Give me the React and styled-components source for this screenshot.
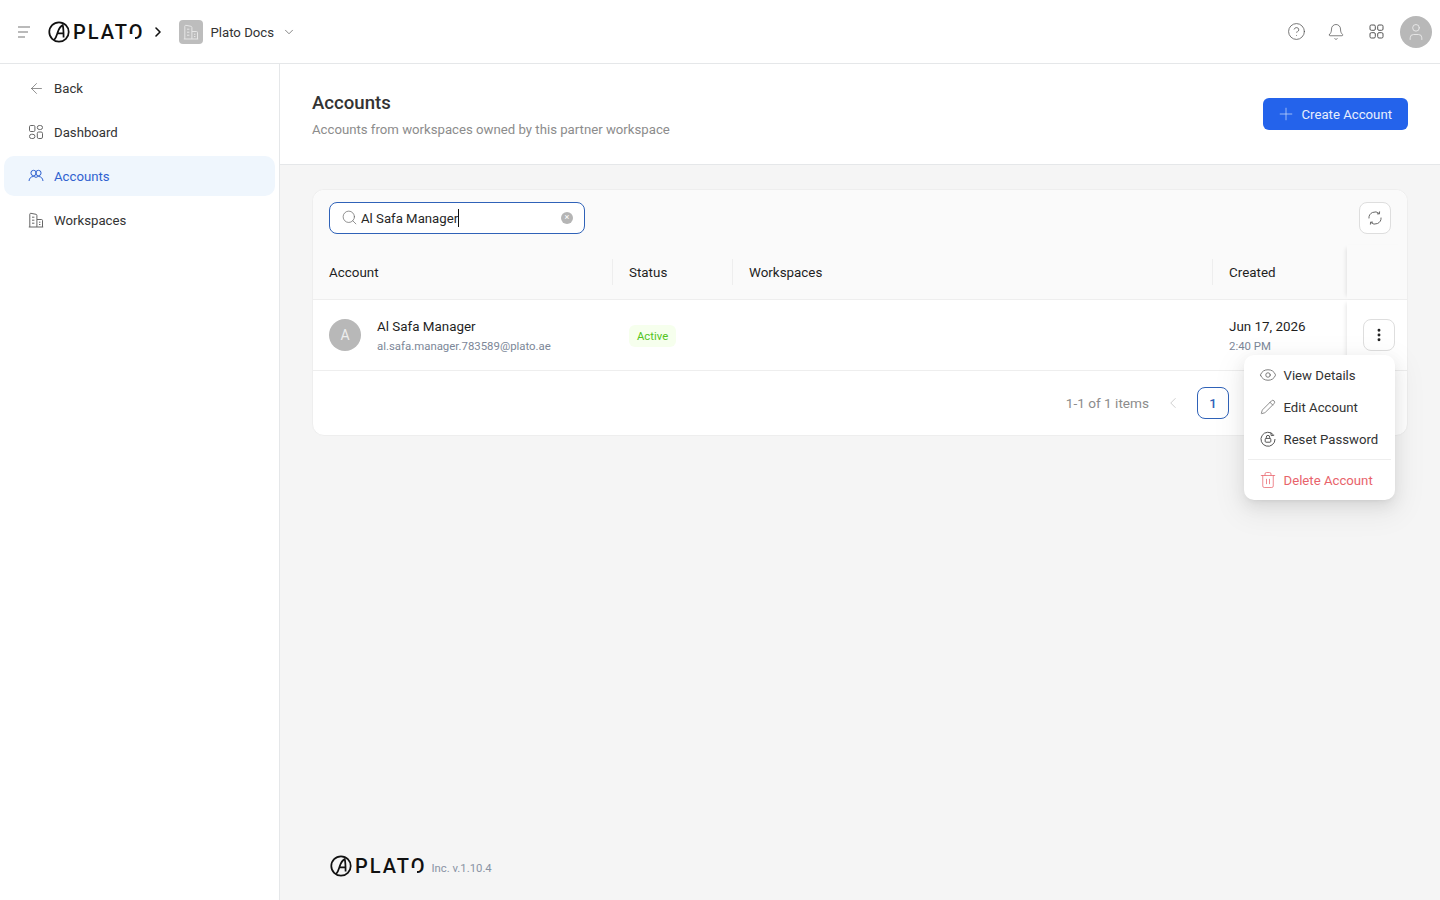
import React from "react";
import styled, { createGlobalStyle } from "styled-components";
import { ArrowLeft, ChevronDown, ChevronLeft, ChevronRight, CircleHelp, Bell, Plus, Search, EllipsisVertical, Eye, Pencil, Trash2, User } from "lucide-react";

const Global = createGlobalStyle`
  html, body { margin: 0; padding: 0; height: 100%; }
  body { font-family: "Roboto", "Noto Sans", sans-serif; background: #fff; color: #262626; font-size: 13.2px; }
  * { box-sizing: border-box; }
`;
const Page = styled.div`width: 1440px; height: 900px; display: flex; flex-direction: column; overflow: hidden;`;
const Header = styled.header`height: 64px; flex: none; display: flex; align-items: center; justify-content: space-between; padding: 0 8px 0 18px; border-bottom: 1px solid #e5e7e9; background: #fff;`;
const HeaderLeft = styled.div`display: flex; align-items: center;`;
const HeaderRight = styled.div`display: flex; align-items: center;`;
const HeaderIconBtn = styled.span`width: 40px; height: 32px; display: flex; align-items: center; justify-content: center; color: #555;`;
const LogoWrap = styled.div`display: flex; align-items: center; gap: 3px; color: #111; margin-left: ${p => p.$ml || 0}px;`;
const Wordmark = styled.span`position: relative; font-family: "Roboto", sans-serif; font-weight: 500; line-height: 1; font-size: 20px; letter-spacing: 2px;
  &::after { content: ""; position: absolute; right: 9px; bottom: 2px; width: 7px; height: 6px; background: ${p => p.$bg}; }`;
const Crumb = styled.span`display: flex; margin: 0 13px 0 6px; color: #111;`;
const WsBadge = styled.span`width: 24px; height: 24px; border-radius: 4px; background: #bdbdbd; color: #e6e6e6; display: flex; align-items: center; justify-content: center;`;
const WsName = styled.span`margin: 0 8px 0 7px; color: #333; padding-top: 1px;`;
const Avatar = styled.span`width: 32px; height: 32px; border-radius: 50%; background: #b8b8b8; color: #eee; display: flex; align-items: center; justify-content: center; font-size: 14px; flex: none;`;
const UserAvatar = styled(Avatar)`margin-left: 4px;`;
const Body = styled.div`flex: 1; display: flex; min-height: 0;`;
const Sidebar = styled.nav`width: 280px; flex: none; border-right: 1px solid #e5e7e9; padding: 4px 4px; display: flex; flex-direction: column; gap: 4px; background: #fff;`;
const NavItem = styled.a`height: 40px; width: 271px; display: flex; align-items: center; gap: 10px; padding-left: 24px; border-radius: 10px; color: ${p => p.$active ? "#2f62d0" : "#333"}; background: ${p => p.$active ? "#eff6fd" : "transparent"};`;
const Slot = styled.span`width: 16px; height: 16px; flex: none; display: flex; align-items: center; justify-content: center; color: ${p => p.$c || "#666"};
  svg { flex: none; }`;
const Main = styled.main`flex: 1; display: flex; flex-direction: column; background: #f5f5f5; min-width: 0;`;
const PageHead = styled.div`height: 101px; flex: none; background: #fff; border-bottom: 1px solid #e5e7e9; padding: 0 32px; display: flex; align-items: center; justify-content: space-between;`;
const Titles = styled.div`display: flex; flex-direction: column; gap: 4px; padding-top: 2px;`;
const Title = styled.h1`margin: 0; font-size: 18.6px; font-weight: 500; color: #333; line-height: 26px;`;
const Sub = styled.p`margin: 0; color: #8c8c8c; line-height: 20px;`;
const Primary = styled.button`height: 32px; padding: 0 16px 0 15px; border: 0; border-radius: 6px; background: #2463eb; color: #e8effd; font: inherit; display: flex; align-items: center; gap: 8px;`;
const Content = styled.div`flex: 1; padding: 24px 32px 0; display: flex; flex-direction: column; min-height: 0;`;
const Card = styled.section`height: 247px; flex: none; background: #fff; border: 1px solid #eee; border-radius: 12px; position: relative; display: flex; flex-direction: column;`;
const Toolbar = styled.div`height: 55px; flex: none; background: #fafafa; border-radius: 12px 12px 0 0; padding: 0 16px; display: flex; align-items: center; justify-content: space-between;`;
const SearchBox = styled.div`width: 256px; height: 32px; border: 1px solid #2f62b8; border-radius: 8px; background: #fff; display: flex; align-items: center; padding: 0 11px; gap: 3px;
  svg { color: #666; flex: none; }`;
const SearchText = styled.span`flex: 1; color: #262626; white-space: nowrap; display: flex; align-items: center; padding-top: 1px;
  &::after { content: ""; width: 1px; height: 18px; background: #111; }`;
const ClearDot = styled.span`width: 12px; height: 12px; border-radius: 50%; background: #b5b5b5; display: flex; align-items: center; justify-content: center; color: #fff; font-size: 9px; line-height: 1;`;
const IconBtn = styled.button`width: 32px; height: 32px; padding: 0; border: 1px solid #dedede; border-radius: 8px; background: #fff; color: ${p => p.$c || "#666"}; display: flex; align-items: center; justify-content: center;`;
const cols = "300px 120px 480px 134px 60px";
const HeadRow = styled.div`height: 55px; flex: none; display: grid; grid-template-columns: ${cols}; background: #fafafa; border-bottom: 1px solid #eee;`;
const HeadCell = styled.div`display: flex; align-items: center; padding-left: 16px; color: #1f1f1f; font-size: 13.4px; position: relative;
  &::after { content: ""; display: ${p => p.$noSep ? "none" : "block"}; position: absolute; right: 0; top: 14px; height: 26px; width: 1px; background: #eeeeee; }`;
const StickyCell = styled.div`display: flex; align-items: center; justify-content: center; box-shadow: -4px 0 4px -3px rgba(0,0,0,.10); padding-left: 4px;`;
const Row = styled.div`height: 71px; flex: none; display: grid; grid-template-columns: ${cols}; border-bottom: 1px solid #eee;`;
const Cell = styled.div`display: flex; align-items: center; padding-left: 16px; gap: 16px; min-width: 0;`;
const Stack = styled.div`display: flex; flex-direction: column; gap: 1px; margin-top: 2px;`;
const Primaryline = styled.div`color: #1f1f1f; font-size: 13.4px; line-height: 20px;`;
const Secondary = styled.div`font-size: 11.4px; color: #7c8798; line-height: 17px;`;
const Tag = styled.span`height: 22px; margin-top: 2px; display: inline-flex; align-items: center; padding: 0 8px; border-radius: 6px; background: #f6ffed; color: #52c41a; font-size: 11.3px;`;
const Pagination = styled.div`flex: 1; display: flex; align-items: center; justify-content: flex-end; padding-right: 138px;`;
const Count = styled.span`color: #8c8c8c; font-size: 13.6px; margin-right: 8px; padding-bottom: 1px;`;
const PageArrow = styled.span`width: 32px; height: 32px; display: flex; align-items: center; justify-content: center; color: #bfbfbf;`;
const PageNum = styled.span`width: 32px; height: 32px; margin: 0 8px; border: 1px solid #2f62b8; border-radius: 8px; color: #2f62b8; font-weight: 500; display: flex; align-items: center; justify-content: center;`;
const Menu = styled.div`position: absolute; left: 931px; top: 165px; width: 151px; height: 145px; background: #fff; border-radius: 10px; box-shadow: 0 6px 16px rgba(0,0,0,.08), 0 3px 6px -4px rgba(0,0,0,.12), 0 9px 28px 8px rgba(0,0,0,.05); padding: 4px; display: flex; flex-direction: column; z-index: 3;`;
const MenuItem = styled.div`height: 32px; flex: none; display: flex; align-items: center; gap: 7.5px; padding-left: 12px; color: ${p => p.$danger ? "#e8636b" : "#333"}; white-space: nowrap;`;
const MenuDivider = styled.div`height: 1px; background: #eee; margin: 4px 0;`;
const Footer = styled.footer`margin-top: auto; height: 64px; display: flex; align-items: center; gap: 5px; padding: 0 0 4px 18px;`;
const Version = styled.span`font-size: 11.3px; color: #8993a4; margin-top: 4px;`;

const Mark = () => (
  <svg width="22" height="22" viewBox="0 0 24 24" fill="none" stroke="currentColor" strokeWidth="1.9">
    <circle cx="12" cy="12" r="10.6" />
    <path d="M6.5 21c2.5-2.5 3-5.5 4-8.5S14 5.5 16 4.5c1 3 1 9 1 13.5M10.5 13.5h6.5" />
  </svg>
);
const Logo = ({ ml, bg }) => (
  <LogoWrap $ml={ml}><Mark /><Wordmark $bg={bg}>PLATO</Wordmark></LogoWrap>
);
const MenuLines = () => (
  <svg width="12" height="12" viewBox="0 0 12 12" fill="none" stroke="#777" strokeWidth="1.1"><path d="M0 1h12M0 6h10M0 11h7" /></svg>
);
const Grid4 = () => (
  <svg width="15" height="15" viewBox="0 0 15 15" fill="none" stroke="currentColor" strokeWidth="1">
    <rect x="1" y="1" width="5.3" height="5.3" rx="1.3" /><rect x="8.7" y="1" width="5.3" height="5.3" rx="1.3" />
    <rect x="1" y="8.7" width="5.3" height="5.3" rx="1.3" /><rect x="8.7" y="8.7" width="5.3" height="5.3" rx="1.3" />
  </svg>
);
const Dash = () => (
  <svg width="16" height="16" viewBox="0 0 16 16" fill="none" stroke="currentColor" strokeWidth="1">
    <rect x="1.5" y="1.5" width="5.4" height="6" rx="1.2" /><rect x="9.3" y="1.5" width="5.2" height="4" rx="2" />
    <rect x="1.5" y="10.3" width="5.4" height="4.2" rx="2" /><rect x="9.3" y="8" width="5.2" height="6.5" rx="1.4" />
  </svg>
);
const People = () => (
  <svg width="16" height="16" viewBox="0 0 16 16" fill="none" stroke="currentColor" strokeWidth="1">
    <circle cx="5.6" cy="5" r="2.7" /><circle cx="10.4" cy="5" r="2.7" />
    <path d="M1 13c.3-2.8 2-4.5 4.4-4.5 1.2 0 2 .4 2.6 1 .6-.6 1.4-1 2.6-1 2.4 0 4.1 1.7 4.4 4.5" />
  </svg>
);
const Building = () => (
  <svg width="16" height="16" viewBox="0 0 16 16" fill="none" stroke="currentColor" strokeWidth="1">
    <path d="M.8 15h14.4M1.8 15V2.2c0-.6.5-1 1-.9l5.2 1c.5.1.9.5.9 1V15M9 7.5h4.6c.5 0 .9.4.9.9V15" />
    <path d="M4 5.2h2.4M4 8.2h2.4M4 11.2h2.4M11 10.2h1.4M11 12.5h1.4" />
  </svg>
);
const Reset = () => (
  <svg width="16" height="16" viewBox="0 0 16 16" fill="none" stroke="currentColor" strokeWidth="1">
    <path d="M13.4 3.8A7 7 0 1 0 15 8" /><path d="M10.8 1.6l.4 3 3-.4" />
    <rect x="5.2" y="7.4" width="5.6" height="3.8" rx=".8" /><path d="M6.3 7.4V6.1a1.7 1.7 0 0 1 3.4 0v1.3" />
  </svg>
);
const Sync = () => (
  <svg width="16" height="16" viewBox="0 0 18 18" fill="none" stroke="currentColor" strokeWidth="1.1">
    <path d="M2.2 9.5A6.9 6.9 0 0 1 13.8 4" /><path d="M14.2 1.6l-.2 2.8-2.8-.1" />
    <path d="M15.8 8.5A6.9 6.9 0 0 1 4.2 14" /><path d="M3.8 16.4l.2-2.8 2.8.1" />
  </svg>
);

export default function App() {
  return (
    <Page>
      <Global />
      <Header>
        <HeaderLeft>
          <MenuLines />
          <Logo ml={18} bg="#fff" />
          <Crumb><ChevronRight size={16} strokeWidth={2.4} /></Crumb>
          <WsBadge><Building /></WsBadge>
          <WsName>Plato Docs</WsName>
          <ChevronDown size={14} strokeWidth={1.2} color="#555" />
        </HeaderLeft>
        <HeaderRight>
          <HeaderIconBtn><CircleHelp size={19} strokeWidth={1} /></HeaderIconBtn>
          <HeaderIconBtn><Bell size={18} strokeWidth={1} /></HeaderIconBtn>
          <HeaderIconBtn><Grid4 /></HeaderIconBtn>
          <UserAvatar><User size={20} strokeWidth={1} /></UserAvatar>
        </HeaderRight>
      </Header>
      <Body>
        <Sidebar>
          <NavItem><Slot><ArrowLeft size={17} strokeWidth={1} /></Slot>Back</NavItem>
          <NavItem><Slot><Dash /></Slot>Dashboard</NavItem>
          <NavItem $active><Slot $c="#2f62d0"><People /></Slot>Accounts</NavItem>
          <NavItem><Slot><Building /></Slot>Workspaces</NavItem>
        </Sidebar>
        <Main>
          <PageHead>
            <Titles>
              <Title>Accounts</Title>
              <Sub>Accounts from workspaces owned by this partner workspace</Sub>
            </Titles>
            <Primary><Slot $c="#c6d8fa"><Plus size={20} strokeWidth={.9} /></Slot>Create Account</Primary>
          </PageHead>
          <Content>
            <Card>
              <Toolbar>
                <SearchBox>
                  <Search size={17} strokeWidth={1} />
                  <SearchText>Al Safa Manager</SearchText>
                  <ClearDot>×</ClearDot>
                </SearchBox>
                <IconBtn><Sync /></IconBtn>
              </Toolbar>
              <HeadRow>
                <HeadCell>Account</HeadCell>
                <HeadCell>Status</HeadCell>
                <HeadCell>Workspaces</HeadCell>
                <HeadCell $noSep>Created</HeadCell>
                <StickyCell />
              </HeadRow>
              <Row>
                <Cell>
                  <Avatar>A</Avatar>
                  <Stack>
                    <Primaryline>Al Safa Manager</Primaryline>
                    <Secondary>al.safa.manager.783589@plato.ae</Secondary>
                  </Stack>
                </Cell>
                <Cell><Tag>Active</Tag></Cell>
                <Cell />
                <Cell>
                  <Stack>
                    <Primaryline>Jun 17, 2026</Primaryline>
                    <Secondary>2:40 PM</Secondary>
                  </Stack>
                </Cell>
                <StickyCell>
                  <IconBtn $c="#222"><EllipsisVertical size={16} strokeWidth={2.4} /></IconBtn>
                </StickyCell>
              </Row>
              <Pagination>
                <Count>1-1 of 1 items</Count>
                <PageArrow><ChevronLeft size={18} strokeWidth={1} /></PageArrow>
                <PageNum>1</PageNum>
                <PageArrow><ChevronRight size={18} strokeWidth={1} /></PageArrow>
              </Pagination>
              <Menu>
                <MenuItem><Slot $c="#555"><Eye size={18} strokeWidth={1} /></Slot>View Details</MenuItem>
                <MenuItem><Slot $c="#555"><Pencil size={16} strokeWidth={1} /></Slot>Edit Account</MenuItem>
                <MenuItem><Slot $c="#555"><Reset /></Slot>Reset Password</MenuItem>
                <MenuDivider />
                <MenuItem $danger><Slot $c="#e8636b"><Trash2 size={18} strokeWidth={1} /></Slot>Delete Account</MenuItem>
              </Menu>
            </Card>
            <Footer>
              <Logo bg="#f5f5f5" />
              <Version>Inc. v.1.10.4</Version>
            </Footer>
          </Content>
        </Main>
      </Body>
    </Page>
  );
}
